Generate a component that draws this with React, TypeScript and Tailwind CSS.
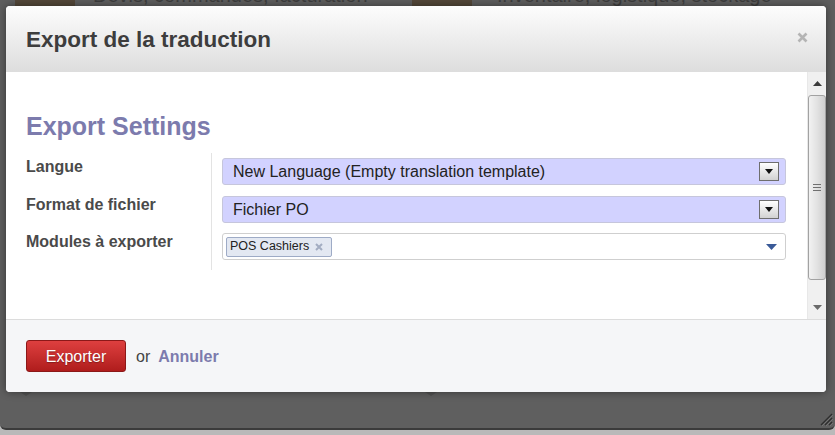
import React from 'react';

const FONT = "font-['Liberation_Sans',Arial,sans-serif]";

function SelectArrow() {
  return (
    <div className="flex h-[19px] w-[20px] items-center justify-center border border-[#6e6e6e] bg-gradient-to-b from-white to-[#d2d2d2]">
      <svg width="8" height="5" viewBox="0 0 8 5">
        <path d="M0 0h8L4 5z" fill="#111" />
      </svg>
    </div>
  );
}

function Scrollbar() {
  return (
    <div className="flex w-[19px] flex-col border-l border-[#e8e8e8] bg-[#f0f0f0]">
      {/* haut */}
      <div className="flex h-[23px] items-center justify-center">
        <svg width="9" height="5" viewBox="0 0 9 5">
          <path d="M4.5 0L9 5H0z" fill="#3c3c3c" />
        </svg>
      </div>
      {/* curseur */}
      <div className="flex h-[185px] items-center justify-center rounded-[3px] border border-[#a2a2a2] bg-gradient-to-r from-[#f2f2f2] via-[#e2e2e2] to-[#cfcfcf]">
        <div className="flex flex-col gap-[2px]">
          <div className="h-[1px] w-[8px] bg-[#707070]" />
          <div className="h-[1px] w-[8px] bg-[#707070]" />
          <div className="h-[1px] w-[8px] bg-[#707070]" />
        </div>
      </div>
      <div className="flex-1" />
      {/* bas */}
      <div className="flex h-[23px] items-center justify-center">
        <svg width="9" height="5" viewBox="0 0 9 5">
          <path d="M0 0h9L4.5 5z" fill="#6a6a6a" />
        </svg>
      </div>
    </div>
  );
}

function BackgroundPage() {
  return (
    <div className="flex flex-col">
      <div className="-mt-[17px] flex pl-[15px]">
        <div className="flex w-[397px]">
          <div className="h-[92px] w-[60px] bg-[#54483a]" />
          <div className="ml-[18px] text-[20px] leading-[24px] text-[#3e3e3e]">Devis, commandes, facturation</div>
        </div>
        <div className="flex">
          <div className="h-[92px] w-[60px] bg-[#54483a]" />
          <div className="ml-[25px] text-[20px] leading-[24px] text-[#3e3e3e]">Inventaire, logistique, stockage</div>
        </div>
      </div>
      <div className="mt-[317px] flex gap-[393px] pl-[20px]">
        <svg width="12" height="4" viewBox="0 0 12 4">
          <path d="M0 0h12L6 4z" fill="#525252" />
        </svg>
        <svg width="12" height="4" viewBox="0 0 12 4">
          <path d="M0 0h12L6 4z" fill="#525252" />
        </svg>
      </div>
    </div>
  );
}

export default function App() {
  return (
    <div className={`relative h-[435px] w-[835px] overflow-hidden bg-[#b9b9b9] ${FONT}`}>
      <div className="relative h-[430px] overflow-hidden rounded-b-[6px] border-b-2 border-[#3b3b3b] bg-[#5f5f5f]">
        <BackgroundPage />
        <svg className="absolute bottom-[2px] right-[2px]" width="15" height="15" viewBox="0 0 15 15">
          <path d="M14 3L3 14M14 7L7 14M14 11L11 14" stroke="#2e2e2e" strokeWidth="1.3" />
          <path d="M15 4L4 15M15 8L8 15M15 12L12 15" stroke="#7a7a7a" strokeWidth="0.8" />
        </svg>
      </div>

      {/* Dialogue */}
      <div className="absolute left-[6px] top-[6px] w-[820px] overflow-hidden rounded-[4px] bg-white shadow-[0_0_8px_rgba(0,0,0,0.45)]">
        <div className="flex h-[66px] items-center justify-between bg-gradient-to-b from-[#fdfdfd] to-[#dddddd] pl-[20px] pr-[18px]">
          <h1 className="mt-[2px] text-[22.5px] font-bold text-[#3d3d3d]">Export de la traduction</h1>
          <svg className="mb-[4px]" width="11" height="11" viewBox="0 0 11 11">
            <path d="M1.5 1.5l8 8M9.5 1.5l-8 8" stroke="#b4b4b4" strokeWidth="2.6" />
          </svg>
        </div>

        <div className="flex h-[247px]">
          <div className="flex-1 pl-[20px] pr-[21px] pt-[39px]">
            <h2 className="text-[25px] font-bold leading-[30px] text-[#7c7bad]">Export Settings</h2>
            <div className="mt-[12px] grid grid-cols-[186px_1fr] text-[16px]">
              <div className="border-r border-[#e3e3e3] pt-[4px] font-bold leading-[20px] text-[#4a4a4a]">Langue</div>
              <div className="pb-[5.5px] pl-[10px] pt-[5px]">
                <div className="flex h-[27px] items-center justify-between rounded-[3px] border border-[#c6c6dc] bg-[#d2d2ff] pl-[10px] pr-[6px] text-[#222]">
                  <span className="mt-[1px]">New Language (Empty translation template)</span>
                  <SelectArrow />
                </div>
              </div>

              <div className="border-r border-[#e3e3e3] pt-[4px] font-bold leading-[20px] text-[#4a4a4a]">Format de fichier</div>
              <div className="pb-[5.5px] pl-[10px] pt-[5px]">
                <div className="flex h-[27px] items-center justify-between rounded-[3px] border border-[#c6c6dc] bg-[#d2d2ff] pl-[10px] pr-[6px] text-[#222]">
                  <span className="mt-[1px]">Fichier PO</span>
                  <SelectArrow />
                </div>
              </div>

              <div className="border-r border-[#e3e3e3] pt-[4px] font-bold leading-[20px] text-[#4a4a4a]">Modules à exporter</div>
              <div className="pb-[10px] pl-[10px] pt-[5px]">
                <div className="flex h-[27px] items-center justify-between rounded-[3px] border border-[#cfcfcf] bg-white pl-[3px] pr-[8px]">
                  <div className="flex h-[20px] items-center gap-[6px] rounded-[2px] border border-[#9eabc6] bg-[#e3e8f2] pl-[3px] pr-[8px] text-[12.5px] text-[#222]">
                    <span>POS Cashiers</span>
                    <svg width="8" height="8" viewBox="0 0 8 8">
                      <path d="M1 1l6 6M7 1L1 7" stroke="#a3adc2" strokeWidth="2" />
                    </svg>
                  </div>
                  <svg width="11" height="6" viewBox="0 0 11 6">
                    <path d="M0 0h11L5.5 6z" fill="#3a5a98" />
                  </svg>
                </div>
              </div>
            </div>
          </div>
          <Scrollbar />
        </div>

        <div className="flex h-[73px] items-start border-t border-[#dcdcdc] bg-[#f5f6f8] pl-[20px] pt-[20px] text-[16px]">
          <button className="h-[32px] w-[100px] rounded-[3px] border border-[#8c1818] bg-gradient-to-b from-[#de3f3f] to-[#b01c1c] pt-[1px] text-white [text-shadow:0_1px_1px_rgba(0,0,0,0.3)]">
            Exporter
          </button>
          <span className="ml-[10px] pt-[1px] leading-[32px] text-[#444]">or</span>
          <span className="ml-[8px] pt-[1px] font-bold leading-[32px] text-[#7c7bad]">Annuler</span>
        </div>
      </div>
    </div>
  );
}
